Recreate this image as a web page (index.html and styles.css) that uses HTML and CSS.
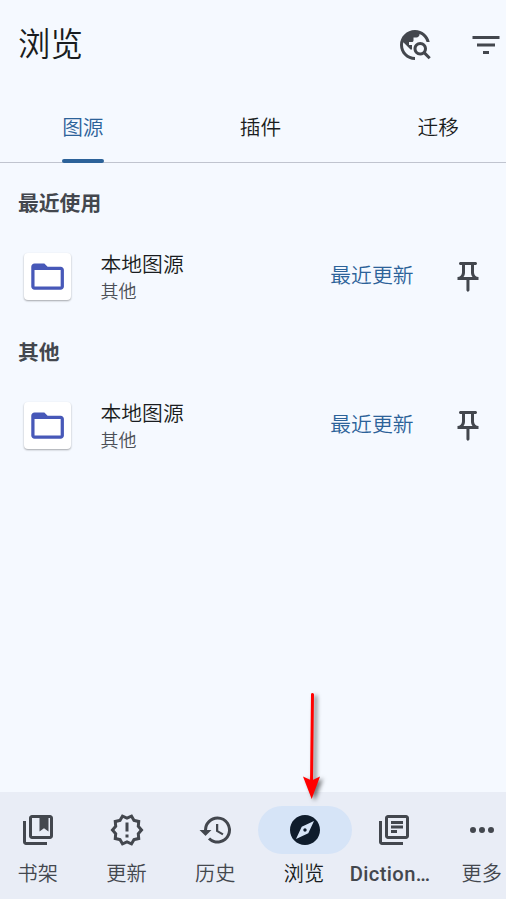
FILE: index.html
```html
<!DOCTYPE html>
<html lang="zh-CN">
<head>
<meta charset="utf-8">
<title>浏览</title>
<link rel="stylesheet" href="styles.css">
</head>
<body>
<svg class="defs" aria-hidden="true">
  <symbol id="folder" viewBox="0 0 24 24"><path d="M20 6h-8l-2-2H4c-1.100 0-2 .9-2 2v12c0 1.100.9 2 2 2h16c1.100 0 2-.9 2-2V8c0-1.100-.9-2-2-2zm0 12H4V8h16v10z"/></symbol>
  <symbol id="pin" viewBox="0 0 24 24"><path d="M14 4v5c0 1.120.370 2.160 1 3H9c.650-.860 1-1.900 1-3V4h4m3-2H7c-.550 0-1 .450-1 1s.450 1 1 1h1v5c0 1.660-1.340 3-3 3v2h5.970v7l1 1 1-1v-7H19v-2c-1.660 0-3-1.340-3-3V4h1c.550 0 1-.450 1-1s-.450-1-1-1z"/></symbol>
</svg>
<div class="app">
  <header class="topbar">
    <h1>浏览</h1>
    <svg class="icon search" viewBox="0 0 24 24"><path d="M19.3 16.9c.4-.7.7-1.5.7-2.400 0-2.500-2-4.500-4.500-4.500S11 12 11 14.500s2 4.500 4.500 4.500c.9 0 1.700-.3 2.400-.7l3.200 3.200 1.400-1.400-3.200-3.200zm-3.800.1c-1.400 0-2.500-1.100-2.500-2.500s1.100-2.500 2.500-2.500 2.500 1.100 2.500 2.500-1.100 2.500-2.500 2.500zM12 20v2C6.480 22 2 17.520 2 12S6.480 2 12 2c4.840 0 8.870 3.440 9.800 8h-2.070c-.640-2.460-2.400-4.470-4.730-5.410V5c0 1.100-.9 2-2 2h-2v2c0 .550-.450 1-1 1H8v2h2v3H9l-4.790-4.790C4.080 10.790 4 11.380 4 12c0 4.410 3.590 8 8 8z"/></svg>
    <svg class="icon filter" viewBox="0 0 24 24"><path d="M10 18h4v-2h-4v2zM3 6v2h18V6H3zm3 7h12v-2H6v2z"/></svg>
  </header>
  <nav class="tabs">
    <a class="tab active"><span>图源</span></a>
    <a class="tab"><span>插件</span></a>
    <a class="tab"><span>迁移</span></a>
  </nav>
  <main>
    <h2>最近使用</h2>
    <div class="row">
      <div class="thumb"><svg viewBox="0 0 24 24"><use href="#folder"/></svg></div>
      <div class="info"><div class="name">本地图源</div><div class="sub">其他</div></div>
      <a class="latest">最近更新</a>
      <svg class="icon" viewBox="0 0 24 24"><use href="#pin"/></svg>
    </div>
    <h2>其他</h2>
    <div class="row">
      <div class="thumb"><svg viewBox="0 0 24 24"><use href="#folder"/></svg></div>
      <div class="info"><div class="name">本地图源</div><div class="sub">其他</div></div>
      <a class="latest">最近更新</a>
      <svg class="icon" viewBox="0 0 24 24"><use href="#pin"/></svg>
    </div>
  </main>
  <nav class="bottom">
    <a class="item"><span class="pill"><svg class="icon" viewBox="0 0 24 24"><path d="M4 6H2v14c0 1.100.9 2 2 2h14v-2H4V6z"/><path fill-rule="evenodd" d="M20 2H8c-1.100 0-2 .9-2 2v12c0 1.100.9 2 2 2h12c1.100 0 2-.9 2-2V4c0-1.100-.9-2-2-2zm0 14H8V4h5v9l3-2.250L19 13V4h1v12z"/></svg></span><span class="label">书架</span></a>
    <a class="item"><span class="pill"><svg class="icon" viewBox="0 0 24 24"><path fill-rule="evenodd" d="M23 12l-2.440-2.780.340-3.680-3.610-.820-1.890-3.180L12 3 8.600 1.540 6.710 4.720l-3.610.810.340 3.680L1 12l2.440 2.780-.340 3.690 3.610.820 1.890 3.180L12 21l3.400 1.460 1.890-3.180 3.610-.820-.340-3.680L23 12zm-4.510 2.110.260 2.790-2.740.620-1.430 2.410L12 18.820l-2.580 1.110-1.430-2.410-2.740-.620.260-2.800L3.660 12l1.850-2.120-.260-2.780 2.740-.610 1.430-2.410L12 5.180l2.580-1.110 1.430 2.410 2.740.620-.260 2.790L20.340 12l-1.850 2.110zM11 15h2v2h-2zM11 7h2v6h-2z"/></svg></span><span class="label">更新</span></a>
    <a class="item"><span class="pill"><svg class="icon" viewBox="0 0 24 24"><path d="M13 3a9 9 0 0 0-9 9H1l3.890 3.890.070.140L9 12H6a7 7 0 1 1 2.060 4.940l-1.420 1.420A9 9 0 1 0 13 3zm-1 5v5l4.280 2.540.720-1.210-3.500-2.080V8H12z"/></svg></span><span class="label">历史</span></a>
    <a class="item active"><span class="pill"><svg class="icon" viewBox="0 0 24 24"><path d="M12 10.900c-.610 0-1.100.490-1.100 1.100s.490 1.100 1.100 1.100c.610 0 1.100-.490 1.100-1.100s-.490-1.100-1.100-1.100zM12 2C6.480 2 2 6.480 2 12s4.480 10 10 10 10-4.480 10-10S17.520 2 12 2zm2.190 12.190L6 18l3.810-8.190L18 6l-3.810 8.190z"/></svg></span><span class="label">浏览</span></a>
    <a class="item"><span class="pill"><svg class="icon" viewBox="0 0 24 24"><path d="M4 6H2v14c0 1.100.9 2 2 2h14v-2H4V6zM10 6h8v2h-8zM10 9h8v2h-8zM10 12h4v2h-4z"/><path fill-rule="evenodd" d="M20 2H8c-1.100 0-2 .9-2 2v12c0 1.100.9 2 2 2h12c1.100 0 2-.9 2-2V4c0-1.100-.9-2-2-2zM8 4h12v12H8z"/></svg></span><span class="label latin">Diction…</span></a>
    <a class="item"><span class="pill"><svg class="icon" viewBox="0 0 24 24"><path d="M6 10a2 2 0 1 0 0 4 2 2 0 0 0 0-4zm12 0a2 2 0 1 0 0 4 2 2 0 0 0 0-4zm-6 0a2 2 0 1 0 0 4 2 2 0 0 0 0-4z"/></svg></span><span class="label">更多</span></a>
  </nav>
</div>
<svg class="arrow" viewBox="0 0 40 120"><path d="M21.500 14.500L20.500 104" fill="none" stroke="#f00" stroke-width="3" stroke-linecap="round"/><path d="M12 96.500l8.700 4 8.300-4-8.300 22.500z" fill="#f00"/></svg>
</body>
</html>
```
FILE: styles.css
```css
* { box-sizing: border-box; }
html, body { height: 100%; }
body {
  margin: 0;
  overflow: hidden;
  background: #f5f9ff;
  color: #191c20;
  font-family: "Noto Sans CJK SC", sans-serif;
  font-weight: 350;
}
.defs { position: absolute; width: 0; height: 0; }
.app {
  display: flex;
  flex-direction: column;
  width: 533px;
  height: 900px;
  margin-left: -6px;
}
.icon { width: 36px; height: 36px; fill: #43474e; flex: none; display: block; }
.topbar { display: flex; align-items: center; height: 90px; padding: 0 23.500px 0 24px; }
h1 { flex: 1; margin: 0; padding-bottom: 6px; font-size: 32.400px; line-height: 48px; font-weight: 350; }
.search { margin-right: 35px; }
.tabs { display: flex; height: 73px; border-bottom: 1px solid #c0c4cf; }
.tab { flex: 1; display: flex; justify-content: center; font-size: 20.700px; }
.tab span { position: relative; height: 73px; padding: 0 0.600px; line-height: 72px; }
.tab.active { color: #2c6299; }
.tab.active span::after {
  content: "";
  position: absolute;
  left: 0;
  right: 0;
  bottom: 0;
  height: 4px;
  border-radius: 2px;
  background: #2c6299;
}
main { flex: 1; }
h2 { margin: 0; padding: 20px 24px 0; height: 69px; font-size: 20.800px; line-height: 38px; font-weight: 700; color: #43474e; }
.row { display: flex; align-items: center; height: 80px; padding: 9px 41.500px 0 30px; }
.thumb {
  display: flex;
  align-items: center;
  justify-content: center;
  width: 47px;
  height: 47px;
  background: #fff;
  border-radius: 4px;
  box-shadow: 0 1px 2px #0005;
}
.thumb svg { width: 39.200px; height: 39.200px; fill: #4758b8; }
.info { flex: 1; padding: 0 0 2px 29.500px; }
.name { font-size: 20.800px; line-height: 28px; }
.sub { font-size: 18px; line-height: 26px; color: #4c5057; }
.latest { margin-right: 36px; padding-bottom: 5px; font-size: 20.800px; color: #2c6299; }
.bottom { display: flex; height: 108px; background: #e9edf6; }
.item { width: 88.800px; flex: none; display: flex; flex-direction: column; align-items: center; color: #43474e; padding-top: 14px; }
.pill { display: flex; align-items: center; justify-content: center; width: 94px; height: 48px; border-radius: 24px; }
.label { font-size: 20.200px; line-height: 28px; margin: 5px 1.500px 0 0; }
.latin { font-family: Roboto, sans-serif; font-weight: 500; letter-spacing: 0.400px; margin: 6px 7px 0 0; }
.active .pill { background: #d6e4f7; }
.active .icon { fill: #0f1c2c; }
.item.active { color: #191c20; }
.arrow {
  position: absolute;
  left: 291px;
  top: 680px;
  width: 40px;
  height: 120px;
  overflow: visible;
  filter: drop-shadow(3px 2px 2px #0008);
}
```
